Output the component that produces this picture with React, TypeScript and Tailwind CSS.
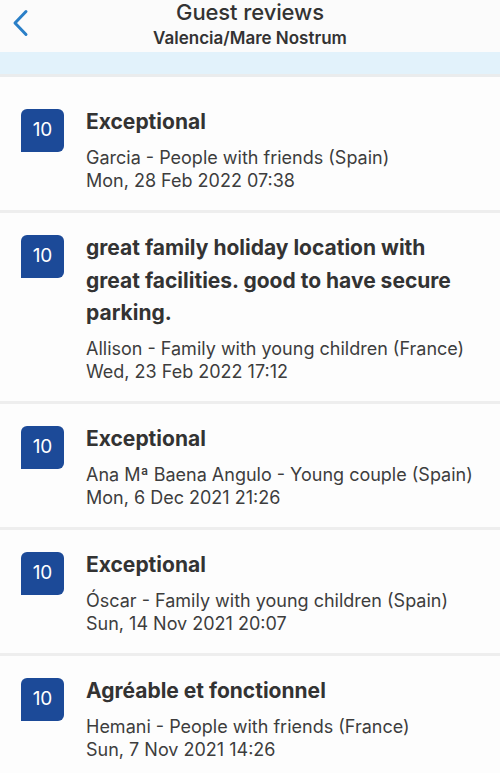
import React from "react";

type Review = { title: string; author: string; date: string };

const reviews: Review[] = [
  { title: "Exceptional", author: "Garcia - People with friends (Spain)", date: "Mon, 28 Feb 2022 07:38" },
  {
    title: "great family holiday location with great facilities. good to have secure parking.",
    author: "Allison - Family with young children (France)",
    date: "Wed, 23 Feb 2022 17:12",
  },
  { title: "Exceptional", author: "Ana Mª Baena Angulo - Young couple (Spain)", date: "Mon, 6 Dec 2021 21:26" },
  { title: "Exceptional", author: "Óscar - Family with young children (Spain)", date: "Sun, 14 Nov 2021 20:07" },
  { title: "Agréable et fonctionnel", author: "Hemani - People with friends (France)", date: "Sun, 7 Nov 2021 14:26" },
];

export default function App() {
  return (
    <div
      className="w-[500px] h-[773px] overflow-hidden bg-[#fdfdfd] text-[#333333]"
      style={{ fontFamily: "Inter, 'Noto Sans', sans-serif" }}
    >
      <header className="relative h-[52px] bg-[#fbfbfb] flex flex-col items-center pt-[1px]">
        <button className="absolute left-[10px] top-[8px] w-[20px] h-[30px] flex items-center justify-center">
          <svg width="18" height="28" viewBox="0 0 18 28" fill="none">
            <path d="M15 2.5 L4 14 L15 25.5" stroke="#2a7fc7" strokeWidth="3" strokeLinecap="round" strokeLinejoin="round" />
          </svg>
        </button>
        <div className="text-[22px] leading-[22px] font-medium text-[#333] tracking-[-0.1px]">Guest reviews</div>
        <div className="text-[17px] leading-[20px] font-semibold text-[#333] mt-[5px]">Valencia/Mare Nostrum</div>
      </header>
      <div className="h-[22px] bg-[#e2f2fb]" />
      <div className="h-[3px] bg-[#eaeced]" />
      <div className="flex flex-col">
        {reviews.map((r, i) => (
          <div key={i} className="flex flex-col">
            <div className={`flex pl-[21px] pr-[20px] pb-[18px] ${i === 0 ? "pt-[29px]" : "pt-[19px]"}`}>
              <div className="mt-[3px] w-[43px] h-[43px] shrink-0 bg-[#1c4a98] rounded-tl-[6px] rounded-tr-[6px] rounded-br-[6px] rounded-bl-none flex items-center justify-center text-white text-[19px] font-normal">
                10
              </div>
              <div className="ml-[22px] flex flex-col">
                <div className="text-[21px] leading-[32.5px] font-bold text-[#333]">{r.title}</div>
                <div className="mt-[7.5px] text-[18px] leading-[23px] text-[#3d3d3d]">{r.author}</div>
                <div className="text-[18px] leading-[23px] text-[#3d3d3d]">{r.date}</div>
              </div>
            </div>
            <div className="h-[3px] bg-[#eeeeee]" />
          </div>
        ))}
      </div>
    </div>
  );
}
